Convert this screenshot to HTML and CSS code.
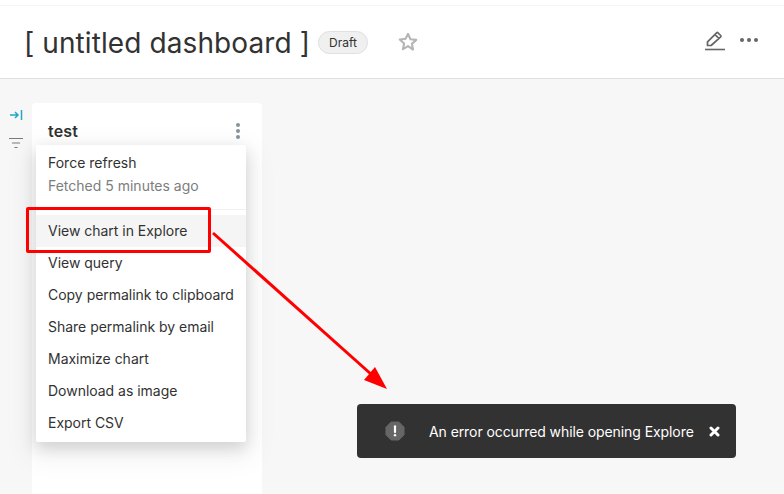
FILE: index.html
```html
<!DOCTYPE html>
<html lang="en">
<head>
    <meta charset="UTF-8">
    <title>[ untitled dashboard ]</title>
    <link rel="stylesheet" href="styles.css">
</head>
<body>
    <div class="topbar"></div>
    <header class="header">
        <h1 class="title">[ untitled dashboard ]</h1>
        <span class="draft">Draft</span>
        <svg class="star" width="22" height="22" viewBox="0 0 20 20"><path d="M10 2.600l2.200 4.900 5.300.6-4 3.600 1.100 5.200L10 13.800l-4.600 2.700 1.100-5.200-4-3.600 5.300-.6z" fill="none" stroke="#b5b5b5" stroke-width="1.900" stroke-linejoin="round"/></svg>
        <div class="header-actions">
            <svg class="pencil" width="22" height="22" viewBox="0 0 22 22"><path d="M3.500 15.500v-3.600L12.600 2.800a1 1 0 0 1 1.400 0l2.700 2.700a1 1 0 0 1 0 1.400L7.100 15.500zM10.900 4.500l4.200 4.200" fill="none" stroke="#666" stroke-width="1.700" stroke-linejoin="round"/><path d="M1 19.500h20" stroke="#666" stroke-width="1.600"/></svg>
            <div class="dots-h"><i></i><i></i><i></i></div>
        </div>
    </header>
    <main class="content">
        <aside class="filters">
            <svg width="14" height="12" viewBox="0 0 14 12"><path d="M1 6h7.500M6 3l3 3-3 3" fill="none" stroke="#20a7c9" stroke-width="1.500"/><path d="M12.500 1v10" stroke="#20a7c9" stroke-width="1.500"/></svg>
            <svg width="14" height="12" viewBox="0 0 14 12"><path d="M0 1.500h14M3 6h8M5.500 10.500h3" stroke="#7a7a7a" stroke-width="1.200"/></svg>
        </aside>
        <section class="card">
            <div class="card-head">
                <span class="card-title">test</span>
                <div class="dots-v"><i></i><i></i><i></i></div>
            </div>
        </section>
    </main>

    <div class="menu">
        <div class="menu-top">
            <div class="menu-text">Force refresh</div>
            <div class="menu-text muted">Fetched 5 minutes ago</div>
        </div>
        <div class="menu-item active">View chart in Explore</div>
        <div class="menu-item">View query</div>
        <div class="menu-item">Copy permalink to clipboard</div>
        <div class="menu-item">Share permalink by email</div>
        <div class="menu-item">Maximize chart</div>
        <div class="menu-item">Download as image</div>
        <div class="menu-item">Export CSV</div>
    </div>

    <!-- red annotation drawn on top of the screenshot -->
    <div class="callout"></div>
    <svg class="arrow" width="784" height="494" viewBox="0 0 784 494">
        <path d="M213 233L372 375" stroke="#f00" stroke-width="3" fill="none"/>
        <path d="M387 389L364 380L375 367z" fill="#f00"/>
    </svg>

    <div class="toast">
        <svg class="toast-icon" width="20" height="20" viewBox="0 0 22 22"><path d="M6.800 1h8.400L21 6.800v8.400L15.200 21H6.800L1 15.200V6.800z" fill="#666" stroke="#666" stroke-width="1" stroke-linejoin="round"/><path d="M11 5.800v6.400" stroke="#fff" stroke-width="2.400" stroke-linecap="round"/><circle cx="11" cy="15.600" r="1.300" fill="#fff"/></svg>
        <span class="toast-text">An error occurred while opening Explore</span>
        <svg class="toast-close" width="11" height="11" viewBox="0 0 11 11"><path d="M2 2l7 7M9 2l-7 7" stroke="#fff" stroke-width="3" stroke-linecap="round"/></svg>
    </div>
</body>
</html>
```

FILE: styles.css
```css
* {
    box-sizing: border-box;
}
html, body {
    height: 100%;
}
body {
    margin: 0;
    height: 494px;
    overflow: hidden;
    display: flex;
    flex-direction: column;
    background: #f7f7f7;
    color: #323232;
    font-family: Inter, "Liberation Sans", sans-serif;
    font-size: 14px;
}
.topbar {
    height: 6px;
    background: #fff;
    border-bottom: 1px solid #f5f5f5;
}
.header {
    height: 73px;
    display: flex;
    align-items: center;
    padding: 0 26px 0 24px;
    background: #fff;
    border-bottom: 1px solid #e0e0e0;
}
.title {
    margin: 2px 0 0;
    font-size: 28px;
    font-weight: 400;
    line-height: 40px;
    letter-spacing: 0.1px;
    color: #323232;
}
.draft {
    margin-left: 8px;
    height: 23px;
    padding: 0 10px;
    display: flex;
    align-items: center;
    font-size: 12px;
    color: #323232;
    background: #f0f0f0;
    border: 1px solid #e0e0e0;
    border-radius: 12px;
}
.star {
    margin-left: 29px;
}
.header-actions {
    margin-left: auto;
    display: flex;
    align-items: center;
    gap: 14px;
    margin-top: -2px;
}
.dots-h {
    display: flex;
    gap: 3px;
    margin-bottom: 2px;
}
.dots-h i {
    width: 4px;
    height: 4px;
    border-radius: 50%;
    background: #666;
}
.content {
    flex: 1;
    display: flex;
    padding-top: 24px;
}
.filters {
    width: 32px;
    padding: 6px 0 0 9px;
    display: flex;
    flex-direction: column;
    gap: 16px;
}
.card {
    width: 230px;
    background: #fff;
    border-radius: 4px 4px 0 0;
}
.card-head {
    display: flex;
    align-items: center;
    justify-content: space-between;
    padding: 17px 22px 0 16px;
}
.card-title {
    font-size: 16px;
    font-weight: 600;
    line-height: 22px;
    letter-spacing: 0.2px;
}
.dots-v {
    display: flex;
    flex-direction: column;
    gap: 2px;
}
.dots-v i {
    width: 4px;
    height: 4px;
    border-radius: 50%;
    background: #879399;
}
.menu {
    position: absolute;
    left: 36px;
    top: 145px;
    width: 210px;
    padding-bottom: 3px;
    background: #fff;
    border-radius: 2px;
    box-shadow: 0 6px 16px rgba(0, 0, 0, 0.15), 0 9px 28px 8px rgba(0, 0, 0, 0.05);
}
.menu-top {
    padding: 6px 12px 12px;
    margin-bottom: 5px;
    border-bottom: 1px solid #f0f0f0;
}
.menu-text {
    line-height: 23px;
}
.muted {
    color: #7d7d7d;
}
.menu-item {
    height: 32px;
    padding: 0 12px;
    line-height: 32px;
    white-space: nowrap;
    letter-spacing: -0.02px;
}
.active {
    background: #f5f5f5;
}
.callout {
    position: absolute;
    left: 26px;
    top: 207px;
    width: 185px;
    height: 46px;
    border: 3px solid #f00;
    border-radius: 2px;
}
.arrow {
    position: absolute;
    left: 0;
    top: 0;
    pointer-events: none;
}
.toast {
    position: absolute;
    left: 357px;
    top: 404px;
    width: 379px;
    height: 54px;
    display: flex;
    align-items: center;
    padding: 0 16px 0 28px;
    background: #323232;
    border-radius: 4px;
    color: #fff;
}
.toast-text {
    margin-left: 24px;
    white-space: nowrap;
    letter-spacing: -0.08px;
}
.toast-close {
    margin-left: auto;
}
```
